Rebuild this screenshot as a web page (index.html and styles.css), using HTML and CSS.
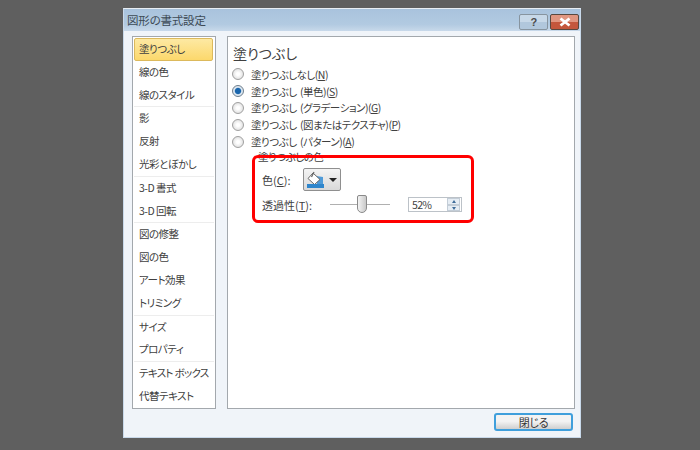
FILE: index.html
```html
<!DOCTYPE html>
<html lang="ja">
<head>
<meta charset="utf-8">
<title>図形の書式設定</title>
<link rel="stylesheet" href="styles.css">
</head>
<body>
<div class="dialog">
  <div class="titlebar">
    <span class="title">図形の書式設定</span>
    <div class="winbtns">
      <span class="winbtn help">?</span>
      <span class="winbtn close"><svg width="14" height="10" viewBox="0 0 14 10"><path d="M2.5 1.5 L11.5 8.5 M11.5 1.5 L2.5 8.5" stroke="#fff" stroke-width="2.8" fill="none"/></svg></span>
    </div>
  </div>
  <div class="main">
    <nav class="list">
      <div class="group">
        <div class="item selected">塗りつぶし</div>
        <div class="item">線の色</div>
        <div class="item">線のスタイル</div>
      </div>
      <div class="group">
        <div class="item">影</div>
        <div class="item">反射</div>
        <div class="item">光彩とぼかし</div>
      </div>
      <div class="group">
        <div class="item">3-D 書式</div>
        <div class="item">3-D 回転</div>
      </div>
      <div class="group">
        <div class="item">図の修整</div>
        <div class="item">図の色</div>
        <div class="item">アート効果</div>
        <div class="item">トリミング</div>
      </div>
      <div class="group">
        <div class="item">サイズ</div>
        <div class="item">プロパティ</div>
      </div>
      <div class="group">
        <div class="item tight">テキスト ボックス</div>
        <div class="item">代替テキスト</div>
      </div>
    </nav>
    <section class="panel">
      <h1 class="heading">塗りつぶし</h1>
      <div class="radios">
        <div class="radio-row"><span class="radio"></span><span>塗りつぶしなし(<u>N</u>)</span></div>
        <div class="radio-row"><span class="radio on"></span><span>塗りつぶし (単色)(<u>S</u>)</span></div>
        <div class="radio-row"><span class="radio"></span><span>塗りつぶし (グラデーション)(<u>G</u>)</span></div>
        <div class="radio-row"><span class="radio"></span><span>塗りつぶし (図またはテクスチャ)(<u>P</u>)</span></div>
        <div class="radio-row"><span class="radio"></span><span>塗りつぶし (パターン)(<u>A</u>)</span></div>
      </div>
      <div class="fill-color">
        <div class="sub">塗りつぶしの色</div>
        <div class="row color-row">
          <span class="label label-color">色(<u>C</u>):</span>
          <span class="colorbtn">
            <svg width="19" height="18" viewBox="0 0 19 18">
              <path d="M10 5 L17 6 L17 13 L11 13 Z" fill="#4f9bd8"/>
              <path d="M7 2 L14 8.5 L8.5 13.5 L2 7.5 Z" fill="#fff" stroke="#666" stroke-width="1"/>
              <path d="M5.5 6 L8 1" stroke="#666" stroke-width="1.2" fill="none"/>
              <rect x="1" y="13" width="17" height="4" fill="#2f86cc"/>
            </svg>
            <span class="caret"></span>
          </span>
        </div>
        <div class="row trans-row">
          <span class="label label-trans">透過性(<u>T</u>):</span>
          <div class="slider"><span class="thumb"></span></div>
          <div class="spin">
            <span class="spin-val">52%</span>
            <span class="spin-btns">
              <span class="spin-btn"><i class="up"></i></span>
              <span class="spin-btn"><i class="down"></i></span>
            </span>
          </div>
        </div>
      </div>
      <div class="highlight"></div>
    </section>
  </div>
  <div class="footer"><button class="closebtn">閉じる</button></div>
</div>
</body>
</html>
```
FILE: styles.css
```css
* { box-sizing: border-box; }
html, body { margin: 0; height: 100%; }
body {
  width: 700px; height: 450px; overflow: hidden;
  background: #5f5f5f;
  padding: 8px 0 0 123px;
  font-family: "Noto Sans CJK JP", "Noto Sans", sans-serif;
  font-feature-settings: "palt";
  color: #404040;
  font-size: 10.5px;
  letter-spacing: -0.5px;
}
.dialog {
  width: 458px; height: 430px;
  background: #f0f4f9;
  border: 1px solid #c9d9ea;
  border-top-color: #e8eef4;
  display: flex; flex-direction: column;
  padding: 0 5px 0 1px;
}
.titlebar {
  height: 22px; margin: 0 -5px 0 -1px; padding: 0 1px 0 3px;
  background: linear-gradient(#a9c3dd, #b2cae1 70%, #c8d9ea);
  display: flex; align-items: center; justify-content: space-between;
}
.title { font-size: 11.5px; letter-spacing: -0.2px; color: #3d4a55; }
.winbtns { display: flex; gap: 2px; margin-top: 3px; }
.winbtn { height: 16px; width: 29px; display: flex; align-items: center; justify-content: center; border-radius: 2px; }
.help { border: 1px solid #87949f; background: linear-gradient(#c7d8e8 50%, #b1c7dc 50%); color: #4a4a4a; font: bold 11px "Liberation Sans", sans-serif; }
.close { border: 1px solid #59493f; background: linear-gradient(#e09680 50%, #c4573c 50%); }
.main { display: flex; gap: 11px; padding: 5px 0 0 7px; height: 378px; }
.list {
  width: 84px; height: 373px; background: #fff;
  border: 1px solid #a3a8ad; padding: 1px;
  display: flex; flex-direction: column;
}
.group { border-bottom: 1px solid #ededed; }
.group:last-child { border-bottom: 0; }
.item { height: 22.8px; line-height: 22.8px; padding-left: 5px; white-space: nowrap; }
.tight { letter-spacing: -0.7px; }
.selected {
  margin-right: 1px;
  background: linear-gradient(#fde9a3, #fcd86c);
  border: 1px solid #dcb95c; border-radius: 2px;
  line-height: 20.8px;
  padding-left: 4px;
}
.panel {
  position: relative;
  width: 348px; height: 373px; background: #fff;
  border: 1px solid #a3a8ad;
  padding: 6px 0 0 5px;
}
.heading { margin: 0; font-size: 14px; letter-spacing: 0; font-weight: 400; line-height: 20px; height: 22px; }
.radios { margin-top: 1px; word-spacing: 1.5px; }
.radio-row { display: flex; align-items: center; gap: 7px; height: 16.8px; white-space: nowrap; }
.radio {
  width: 12px; height: 12px; border-radius: 50%; flex: none; margin-left: -1px;
  border: 1px solid #a0a0a0; background: radial-gradient(#fff 20%, #d4d4d4);
}
.radio.on { background: radial-gradient(#1a66ad 38%, #dbe6f0 52%); border-color: #6e7e8c; }
.fill-color { margin-top: -1px; padding-left: 25px; }
.sub { height: 16px; line-height: 16px; }
.row { display: flex; align-items: center; padding-left: 4px; }
.color-row { height: 24px; margin-top: 3px; }
.label { white-space: nowrap; flex: none; font-size: 11px; letter-spacing: 0; }
.label-color { width: 41px; }
.label-trans { width: 68px; }
.colorbtn {
  width: 38px; height: 23px; border: 1px solid #8f8f8f; border-radius: 2px;
  background: linear-gradient(#f4f4f4, #d9d9d9);
  display: flex; align-items: center; gap: 4px; padding-left: 2px;
}
.caret { width: 0; height: 0; border: 4px solid transparent; border-top: 4px solid #222; border-bottom: 0; }
.trans-row { height: 18px; margin-top: 4px; }
.slider { width: 60px; height: 1px; background: #b0b0b0; position: relative; }
.thumb {
  position: absolute; left: 27px; top: -9px;
  width: 10px; height: 18px; border: 1px solid #8a8a8a;
  border-radius: 2px 2px 5px 5px;
  background: linear-gradient(90deg, #f3f3f3, #c9c9c9);
}
.spin {
  width: 54px; height: 15px; margin-left: 18px; border: 1px solid #bcc2c8; background: #fff;
  display: flex; justify-content: space-between; align-items: center; padding-right: 1px;
}
.spin-val { font-size: 10.5px; letter-spacing: -0.7px; padding-left: 3px; }
.spin-btns { display: flex; flex-direction: column; width: 13px; height: 13px; }
.spin-btn { flex: 1; background: #e6edf4; border: 1px solid #c3cdd7; display: flex; align-items: center; justify-content: center; }
.spin-btn i { width: 0; height: 0; border: 2.5px solid transparent; }
.spin-btn .up { border-bottom: 3px solid #3f6d9a; border-top: 0; }
.spin-btn .down { border-top: 3px solid #3f6d9a; border-bottom: 0; }
.highlight {
  position: absolute; left: 24px; top: 118px; width: 222px; height: 68px;
  border: 3px solid #f00; border-radius: 6px;
}
.footer { display: flex; justify-content: flex-end; padding: 4px 2px 0 0; }
.closebtn {
  width: 79px; height: 18px; padding: 0;
  border: 2px solid #3f9fdc; border-radius: 3px;
  background: linear-gradient(#f3f3f3 45%, #cfcfcf);
  font: inherit; font-size: 11px; letter-spacing: -0.3px; line-height: 14px; color: #333;
}
```
